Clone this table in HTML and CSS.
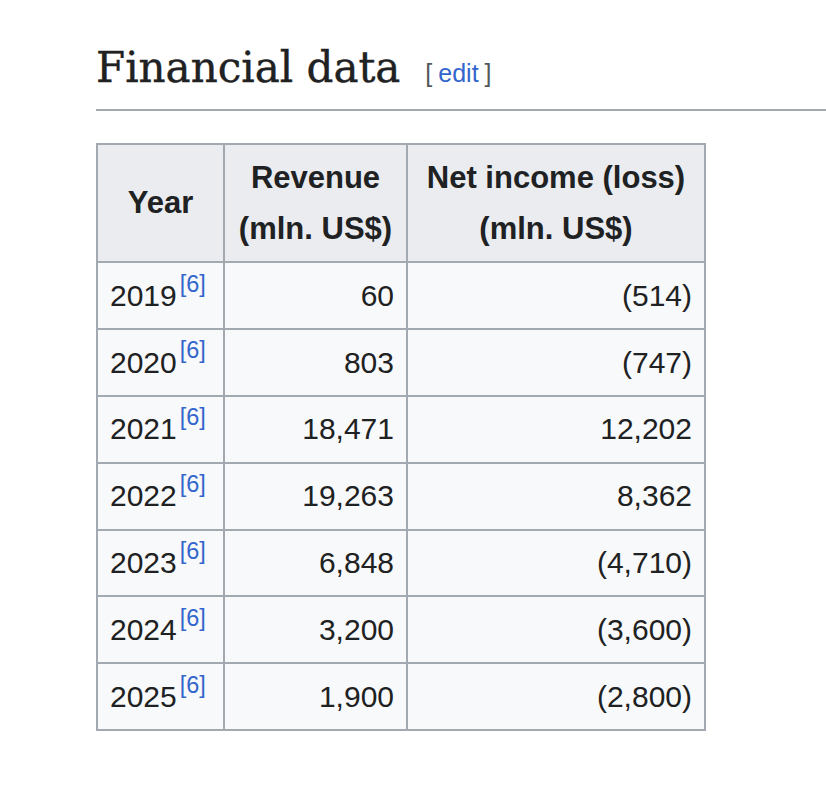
FILE: index.html
```html
<!DOCTYPE html>
<html lang="en">
<head>
<meta charset="utf-8">
<title>Financial data</title>
<link rel="stylesheet" href="styles.css">
</head>
<body>
<main class="content">
  <div class="heading">
    <h2 class="heading-title">Financial data</h2>
    <span class="editsection"><span class="bracket">[</span><a href="#" class="edit-link">edit</a><span class="bracket">]</span></span>
  </div>
  <table class="wikitable">
    <colgroup>
      <col class="col-year">
      <col class="col-rev">
      <col class="col-net">
    </colgroup>
    <thead>
      <tr>
        <th>Year</th>
        <th>Revenue<br>(mln. US$)</th>
        <th>Net income (loss)<br>(mln. US$)</th>
      </tr>
    </thead>
    <tbody>
      <tr><td>2019<sup class="ref"><a href="#">[6]</a></sup></td><td class="num">60</td><td class="num">(514)</td></tr>
      <tr><td>2020<sup class="ref"><a href="#">[6]</a></sup></td><td class="num">803</td><td class="num">(747)</td></tr>
      <tr><td>2021<sup class="ref"><a href="#">[6]</a></sup></td><td class="num">18,471</td><td class="num">12,202</td></tr>
      <tr><td>2022<sup class="ref"><a href="#">[6]</a></sup></td><td class="num">19,263</td><td class="num">8,362</td></tr>
      <tr><td>2023<sup class="ref"><a href="#">[6]</a></sup></td><td class="num">6,848</td><td class="num">(4,710)</td></tr>
      <tr><td>2024<sup class="ref"><a href="#">[6]</a></sup></td><td class="num">3,200</td><td class="num">(3,600)</td></tr>
      <tr><td>2025<sup class="ref"><a href="#">[6]</a></sup></td><td class="num">1,900</td><td class="num">(2,800)</td></tr>
    </tbody>
  </table>
</main>
</body>
</html>
```

FILE: styles.css
```css
html, body {
  margin: 0;
  padding: 0;
  background: #ffffff;
}

body {
  font-family: "Liberation Sans", Arial, sans-serif;
  color: #202122;
}

.content {
  padding: 42px 0 0 96px;
}

.heading {
  display: flex;
  align-items: baseline;
  border-bottom: 2px solid #a2a9b1;
  padding-bottom: 15px;
}

.heading-title {
  margin: 0;
  font-family: "DejaVu Serif", Georgia, serif;
  font-weight: normal;
  font-size: 42px;
  line-height: 52px;
  color: #202122;
  -webkit-text-stroke: 0.4px #202122;
}

.editsection {
  margin-left: 25px;
  font-family: "Liberation Sans", Arial, sans-serif;
  font-size: 25px;
  color: #54595d;
}

.bracket {
  color: #54595d;
}

.edit-link {
  color: #3366cc;
  text-decoration: none;
  margin: 0 6px;
}

.wikitable {
  margin-top: 32px;
  border-collapse: collapse;
  table-layout: fixed;
  width: 608px;
  background: #f8f9fa;
  font-size: 30px;
  line-height: 51.5px;
  color: #202122;
}

.col-year { width: 127px; }
.col-rev { width: 183px; }
.col-net { width: 298px; }

.wikitable th,
.wikitable td {
  border: 2px solid #a2a9b1;
  padding: 6.7px 12px;
}

.wikitable th {
  background: #eaecf0;
  font-weight: bold;
  font-size: 31px;
  text-align: center;
  vertical-align: middle;
  padding-top: 6.5px;
  padding-bottom: 6.5px;
}

.wikitable td {
  text-align: left;
}

.wikitable td.num {
  text-align: right;
}

.ref {
  font-size: 23.5px;
  line-height: 0;
  vertical-align: 0.6em;
  margin-left: 3px;
}

.ref a {
  color: #3366cc;
  text-decoration: none;
}
```
